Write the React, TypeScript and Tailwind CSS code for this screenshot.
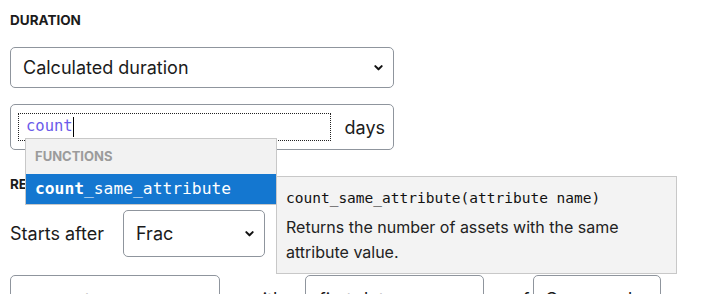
import React from 'react';

const Chevron: React.FC = () => (
    <svg width="11" height="11" viewBox="0 0 12 12" className="shrink-0">
        <path d="M2.5 4.5 L6 8 L9.5 4.5" fill="none" stroke="#111" strokeWidth="2.2" strokeLinecap="round" strokeLinejoin="round" />
    </svg>
);

const FakeSelect: React.FC<{ value: string; className?: string }> = ({ value, className }) => (
    <div className={`flex items-center justify-between border border-[#8f959d] rounded-[5px] bg-white pl-[12px] pr-[9px] text-[18px] text-[#1b1b1b] ${className ?? ''}`}>
        <span>{value}</span>
        <Chevron />
    </div>
);

const App: React.FC = () => {
    return (
        <div
            className="relative w-[702px] h-[294px] overflow-hidden bg-white px-[10px] text-[#1b1b1b]"
            style={{ fontFamily: 'Inter, "Noto Sans", sans-serif' }}
        >
            <div className="pt-[12px] text-[13.5px] font-bold leading-[16px]">DURATION</div>

            <FakeSelect value="Calculated duration" className="mt-[19px] w-[384px] h-[41px]" />

            <div className="mt-[16px] w-[384px] h-[46px] border border-[#8f959d] rounded-[5px] flex items-center pl-[7px] pr-[8px]">
                <div className="w-[313px] h-[28px] border border-dotted border-[#222] flex items-center pl-[7px]">
                    <span className="text-[15.5px] text-[#6a5bea] font-['DejaVu_Sans_Mono',monospace]">count</span>
                    <span className="w-[1px] h-[20px] bg-black" />
                </div>
                <span className="ml-auto text-[18px]">days</span>
            </div>

            <div className="mt-[26px] text-[13.5px] font-bold leading-[16px]">RELATIVE START</div>

            <div className="mt-[18px] flex items-center">
                <span className="w-[113px] text-[18px]">Starts after</span>
                <FakeSelect value="Frac" className="w-[142px] h-[47px]" />
            </div>

            <div className="mt-[18px] flex items-start">
                <div className="w-[210px] h-[40px] border border-[#8f959d] rounded-[5px] pl-[14px] pt-[10px] text-[18px]">percentage</div>
                <span className="w-[85px] pl-[28px] pt-[11px] text-[18px]">with</span>
                <div className="w-[179px] h-[40px] border border-[#8f959d] rounded-[5px] pl-[13px] pt-[10px] text-[18px]">first date</div>
                <span className="w-[49px] pl-[28px] pt-[11px] text-[18px]">of</span>
                <div className="w-[128px] h-[40px] border border-[#8f959d] rounded-[5px] pl-[11px] pt-[10px] text-[18px]">Commands</div>
            </div>

            {/* autocomplete dropdown */}
            <div className="absolute left-[25px] top-[138px] w-[252px] border border-[#c8c8c8] bg-white">
                <div className="h-[35px] bg-[#f2f2f2] flex items-center pl-[9px] text-[13px] font-bold text-[#9b9b9b]">FUNCTIONS</div>
                <div className="h-[30px] bg-[#1477d0] flex items-center pl-[9px] text-[16.3px] text-white font-['DejaVu_Sans_Mono',monospace]">
                    <b>count</b>
                    <span>_same_attribute</span>
                </div>
            </div>

            {/* tooltip */}
            <div className="absolute left-[276px] top-[176px] w-[401px] h-[98px] border border-[#c8c8c8] bg-[#f3f3f3] pl-[9px] pt-[11px]">
                <div className="text-[14.5px] leading-[20px] text-[#111] font-['DejaVu_Sans_Mono',monospace]">count_same_attribute(attribute name)</div>
                <div className="mt-[7px] text-[16px] leading-[25px] text-[#222]">
                    Returns the number of assets with the same attribute value.
                </div>
            </div>
        </div>
    );
};

export default App;
